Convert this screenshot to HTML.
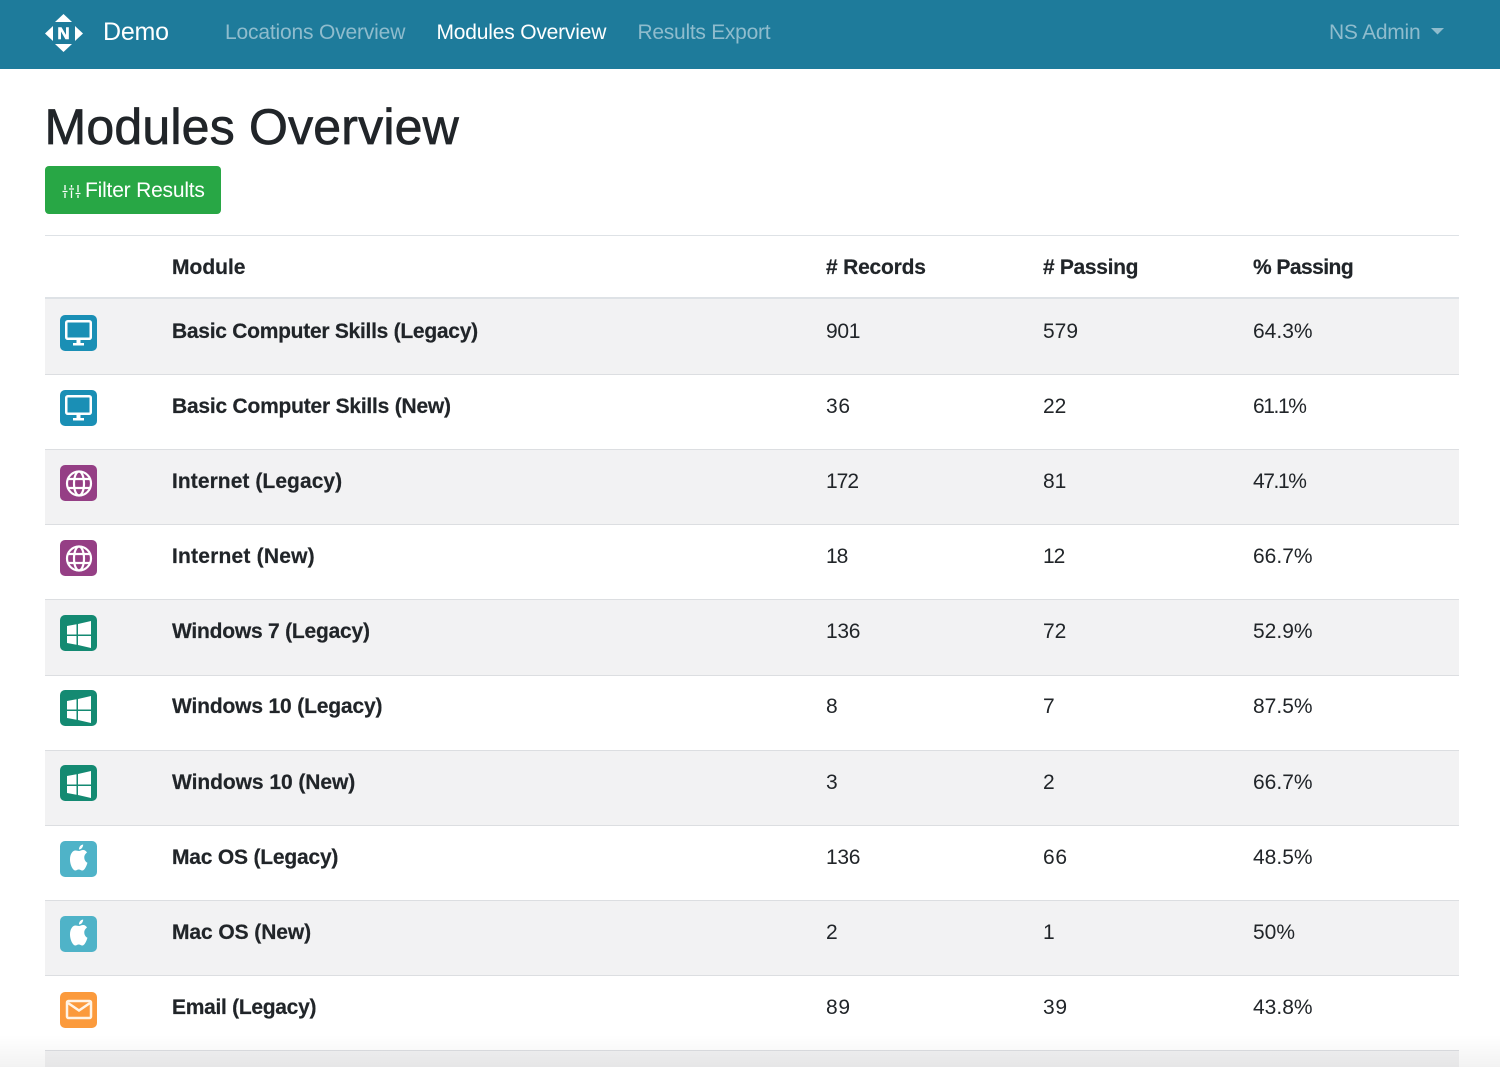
<!DOCTYPE html>
<html><head><meta charset="utf-8"><title>Modules Overview</title>
<style>
*{box-sizing:border-box}
html,body{margin:0;padding:0;width:1500px;height:1067px;overflow:hidden;background:#fff;font-family:"Liberation Sans",sans-serif;color:#212529}
#p{position:relative;width:1500px;height:1067px;overflow:hidden;background:#fff}
.t{position:absolute;white-space:nowrap;line-height:30px}
.nav{position:absolute;left:0;top:0;width:1500px;height:69px;background:#1e7b9b}
.n{font-size:21px;color:#8fbccd;top:18px}
.b{font-weight:bold;font-size:21px;-webkit-text-stroke:.2px #212529}
.c{font-size:21px}
.row{position:absolute;left:45px;width:1414px;border-bottom:1px solid #dcdee1}
.odd{background:#f2f2f3}
.ic{position:absolute;left:60px;width:37px;height:36px;border-radius:5px}
.ic svg{position:absolute;left:0;top:0}
</style></head><body><div id="p">
<div class="nav">
<svg style="position:absolute;left:44px;top:13px" width="40" height="40" viewBox="0 0 40 40"><g fill="#fff"><path d="M19.5 1L28 9H11Z"/><path d="M19.5 39L11 31H28Z"/><path d="M1 20.500L9 13V28Z"/><path d="M39 20.500L31 13V28Z"/></g><text x="19.5" y="26" text-anchor="middle" font-family="Liberation Sans" font-weight="bold" font-size="17" fill="#fff" stroke="#fff" stroke-width=".6">N</text></svg>
<div class="t" style="left:103px;top:17px;font-size:25px;color:#fff;letter-spacing:-.2px">Demo</div>
<div class="t n" style="left:225px;letter-spacing:-.17px">Locations Overview</div>
<div class="t n" style="left:436.5px;color:#fff;letter-spacing:-.19px">Modules Overview</div>
<div class="t n" style="left:637.5px;letter-spacing:-.27px">Results Export</div>
<div class="t n" style="left:1329px;letter-spacing:-.25px">NS Admin</div>
<svg style="position:absolute;left:1431px;top:28px" width="13" height="7"><path d="M0 0H13L6.5 6.500Z" fill="#8fbccd"/></svg>
</div>
<div class="t" style="left:44.500px;top:99px;font-size:50px;line-height:56px;color:#212529;letter-spacing:.2px;-webkit-text-stroke:.7px #212529">Modules Overview</div>
<div style="position:absolute;left:45px;top:166px;width:176px;height:48px;background:#28a745;border-radius:4px"></div>
<svg style="position:absolute;left:62px;top:183px" width="19" height="17" viewBox="0 0 19 17" stroke="#fff" stroke-width="1.300" fill="none"><path d="M3 2V7M3 10V15M9.500 2V4.500M9.500 7.500V15M16 2V9M16 12V15M.5 8.500H5.500M7 6H12M13.500 10.500H18.500"/></svg>
<div class="t" style="left:85px;top:176px;font-size:21px;color:#fff;letter-spacing:-.2px">Filter Results</div>

<div style="position:absolute;left:45px;top:235px;width:1414px;height:1px;background:#dee2e6"></div>
<div style="position:absolute;left:45px;top:297px;width:1414px;height:2px;background:#dee2e6"></div>
<div class="t b" style="left:172px;top:253px">Module</div>
<div class="t b" style="left:826px;top:253px;letter-spacing:-.2px"># Records</div>
<div class="t b" style="left:1043px;top:253px;letter-spacing:-.33px"># Passing</div>
<div class="t b" style="left:1253px;top:253px;letter-spacing:-.55px">% Passing</div>

<div class="row odd" style="top:299px;height:76px"></div>
<div class="row" style="top:375px;height:75px"></div>
<div class="row odd" style="top:450px;height:75px"></div>
<div class="row" style="top:525px;height:75px"></div>
<div class="row odd" style="top:600px;height:76px"></div>
<div class="row" style="top:676px;height:75px"></div>
<div class="row odd" style="top:751px;height:75px"></div>
<div class="row" style="top:826px;height:75px"></div>
<div class="row odd" style="top:901px;height:75px"></div>
<div class="row" style="top:976px;height:75px"></div>
<div class="row odd" style="top:1051px;height:16px;border-bottom:0"></div>

<div class="ic" style="top:315px;background:#1a8fb5"><svg width="37" height="36" fill="none"><rect x="6.250" y="6.250" width="24.500" height="17.500" rx="1.500" stroke="#fff" stroke-width="2.500"/><path d="M16.500 25H20.500V28H24V30.500H13V28H16.500Z" fill="#fff"/></svg></div>
<div class="ic" style="top:390px;background:#1a8fb5"><svg width="37" height="36" fill="none"><rect x="6.250" y="6.250" width="24.500" height="17.500" rx="1.500" stroke="#fff" stroke-width="2.500"/><path d="M16.500 25H20.500V28H24V30.500H13V28H16.500Z" fill="#fff"/></svg></div>
<div class="ic" style="top:465px;background:#953f85"><svg width="37" height="36" fill="none" stroke="#fff" stroke-width="2.200"><circle cx="19" cy="18.500" r="12"/><ellipse cx="19" cy="18.500" rx="5" ry="12"/><path d="M7.500 14H30.500M7.500 23H30.500"/></svg></div>
<div class="ic" style="top:540px;background:#953f85"><svg width="37" height="36" fill="none" stroke="#fff" stroke-width="2.200"><circle cx="19" cy="18.500" r="12"/><ellipse cx="19" cy="18.500" rx="5" ry="12"/><path d="M7.500 14H30.500M7.500 23H30.500"/></svg></div>
<div class="ic" style="top:615px;background:#148a72"><svg width="37" height="36" fill="#fff"><path d="M7 11L16.500 9.300V19.500H7ZM18 9L31 6V19.500H18ZM7 21H16.500V29.700L7 28ZM18 21H31V33L18 30Z"/></svg></div>
<div class="ic" style="top:690px;background:#148a72"><svg width="37" height="36" fill="#fff"><path d="M7 11L16.500 9.300V19.500H7ZM18 9L31 6V19.500H18ZM7 21H16.500V29.700L7 28ZM18 21H31V33L18 30Z"/></svg></div>
<div class="ic" style="top:765px;background:#148a72"><svg width="37" height="36" fill="#fff"><path d="M7 11L16.500 9.300V19.500H7ZM18 9L31 6V19.500H18ZM7 21H16.500V29.700L7 28ZM18 21H31V33L18 30Z"/></svg></div>
<div class="ic" style="top:841px;background:#4fb3c8"><svg width="37" height="36" fill="#fff"><path transform="translate(3.200 -1) scale(.85 1)" d="M23.500 4.500C23.500 7.500 21 9.500 18.500 9.500C18.500 7 20.500 4.800 23.500 4.500ZM18.500 11C20 11 21.300 10 23.500 10C25.500 10 27 11 28 12.500C25.500 14 24.800 16 24.800 17.500C24.800 20 26.500 22 28.500 22.700C27.500 26 25 30.500 22.500 30.500C20.800 30.500 20 29.500 18.300 29.500C16.500 29.500 15.800 30.500 14.200 30.500C11.500 30.500 8 25 8 19.500C8 14 11 10.500 14.500 10.500C16 10.500 17.300 11 18.500 11Z"/></svg></div>
<div class="ic" style="top:916px;background:#4fb3c8"><svg width="37" height="36" fill="#fff"><path transform="translate(3.200 -1) scale(.85 1)" d="M23.500 4.500C23.500 7.500 21 9.500 18.500 9.500C18.500 7 20.500 4.800 23.500 4.500ZM18.500 11C20 11 21.300 10 23.500 10C25.500 10 27 11 28 12.500C25.500 14 24.800 16 24.800 17.500C24.800 20 26.500 22 28.500 22.700C27.500 26 25 30.500 22.500 30.500C20.800 30.500 20 29.500 18.300 29.500C16.500 29.500 15.800 30.500 14.200 30.500C11.500 30.500 8 25 8 19.500C8 14 11 10.500 14.500 10.500C16 10.500 17.300 11 18.500 11Z"/></svg></div>
<div class="ic" style="top:992px;background:#fb9a3c"><svg width="37" height="36" fill="none" stroke="#fff4e6" stroke-width="2.500"><rect x="7" y="9" width="24" height="17" rx="1.500"/><path d="M8 11L19 18.500L30 11"/></svg></div>

<div class="t b" style="left:172px;top:317px;letter-spacing:-.27px">Basic Computer Skills (Legacy)</div><div class="t c" style="left:826px;top:317px;letter-spacing:-.3px">901</div><div class="t c" style="left:1043px;top:317px">579</div><div class="t c" style="left:1253px;top:317px">64.3%</div>
<div class="t b" style="left:172px;top:392px;letter-spacing:-.22px">Basic Computer Skills (New)</div><div class="t c" style="left:826px;top:392px;letter-spacing:.7px">36</div><div class="t c" style="left:1043px;top:392px">22</div><div class="t c" style="left:1253px;top:392px;letter-spacing:-1.400px">61.1%</div>
<div class="t b" style="left:172px;top:467px;letter-spacing:.06px">Internet (Legacy)</div><div class="t c" style="left:826px;top:467px;letter-spacing:-1px">172</div><div class="t c" style="left:1043px;top:467px">81</div><div class="t c" style="left:1253px;top:467px;letter-spacing:-1.400px">47.1%</div>
<div class="t b" style="left:172px;top:542px;letter-spacing:.2px">Internet (New)</div><div class="t c" style="left:826px;top:542px;letter-spacing:-1px">18</div><div class="t c" style="left:1043px;top:542px;letter-spacing:-1px">12</div><div class="t c" style="left:1253px;top:542px">66.7%</div>
<div class="t b" style="left:172px;top:617px;letter-spacing:-.22px">Windows 7 (Legacy)</div><div class="t c" style="left:826px;top:617px;letter-spacing:-.3px">136</div><div class="t c" style="left:1043px;top:617px">72</div><div class="t c" style="left:1253px;top:617px">52.9%</div>
<div class="t b" style="left:172px;top:692px;letter-spacing:-.16px">Windows 10 (Legacy)</div><div class="t c" style="left:826px;top:692px">8</div><div class="t c" style="left:1043px;top:692px">7</div><div class="t c" style="left:1253px;top:692px">87.5%</div>
<div class="t b" style="left:172px;top:768px;letter-spacing:-.06px">Windows 10 (New)</div><div class="t c" style="left:826px;top:768px">3</div><div class="t c" style="left:1043px;top:768px">2</div><div class="t c" style="left:1253px;top:768px">66.7%</div>
<div class="t b" style="left:172px;top:843px;letter-spacing:-.2px">Mac OS (Legacy)</div><div class="t c" style="left:826px;top:843px;letter-spacing:-.3px">136</div><div class="t c" style="left:1043px;top:843px;letter-spacing:.7px">66</div><div class="t c" style="left:1253px;top:843px">48.5%</div>
<div class="t b" style="left:172px;top:918px;letter-spacing:-.08px">Mac OS (New)</div><div class="t c" style="left:826px;top:918px">2</div><div class="t c" style="left:1043px;top:918px">1</div><div class="t c" style="left:1253px;top:918px">50%</div>
<div class="t b" style="left:172px;top:993px;letter-spacing:-.29px">Email (Legacy)</div><div class="t c" style="left:826px;top:993px;letter-spacing:.7px">89</div><div class="t c" style="left:1043px;top:993px;letter-spacing:.7px">39</div><div class="t c" style="left:1253px;top:993px">43.8%</div>
<div style="position:absolute;left:0;top:1035px;width:1500px;height:32px;background:linear-gradient(to bottom,rgba(0,0,0,0),rgba(0,0,0,.05))"></div>
</div></body></html>
